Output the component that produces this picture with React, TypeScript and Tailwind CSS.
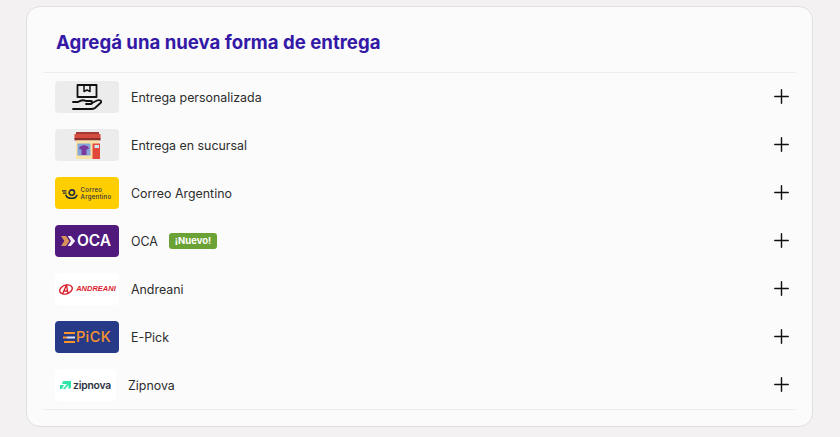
import React from 'react';
import { Plus } from 'lucide-react';

const BoxHandLogo = () => (
  <div className="w-16 h-8 rounded bg-[#ececec] flex items-center justify-center">
    <svg width="30" height="27" viewBox="0 0 30 27" fill="none" stroke="#111111" strokeWidth="1.8" strokeLinecap="round" strokeLinejoin="round">
      <path d="M5.500 13V1h19v12h-19" />
      <path d="M12 1v6.500l3-1.500 3 1.500V1" strokeWidth="1.500" />
      <path d="M1 18h5c3-2 6-2 8-1h5c1.500 0 1.500 3 0 3h-5" />
      <path d="M18 20l7-3.500c3-1 5 .5 4 2l-6 5.500c-1 .8-2 1-4 1H1" />
    </svg>
  </div>
);

const StoreLogo = () => (
  <div className="w-16 h-8 rounded bg-[#ececec] flex items-center justify-center">
    <svg width="27" height="27" viewBox="0 0 27 27">
      <rect x="2" y="0" width="23" height="2" fill="#a33a35" />
      <rect x="0.500" y="2" width="26" height="5" fill="#d44b40" />
      <rect x="0.500" y="6" width="26" height="2.500" fill="#8f2f2c" />
      <rect x="2" y="8.500" width="23" height="18.500" fill="#f8e2a6" />
      <rect x="3.500" y="11.500" width="13" height="12" fill="#86a5d8" />
      <path d="M6 14.500l4-1.500 4 1.500 1 2.500-2.500 .5V23h-5v-5.500L5 17z" fill="#7b3a9c" />
      <rect x="18.500" y="11.500" width="7.500" height="15.500" fill="#e2493b" />
      <rect x="20.500" y="13" width="4.500" height="3" fill="#cfe4f5" />
    </svg>
  </div>
);

const CorreoLogo = () => (
  <div className="w-16 h-8 rounded bg-[#ffce00] flex items-center justify-center gap-[2px] pr-[1px]">
    <svg width="17" height="11" viewBox="0 0 19 12" fill="none" stroke="#1f2a44">
      <circle cx="11" cy="5" r="3" strokeWidth="1.800" />
      <path d="M4 7.500c1 3 4 4 7 4s5-1 6-4" strokeWidth="1.800" />
      <path d="M0 3h5M1 5.500h4" strokeWidth="1.400" />
    </svg>
    <div className="flex flex-col text-[6px] leading-[7px] font-medium text-[#1f2a44] tracking-[0.3px]">
      <span>Correo</span>
      <span>Argentino</span>
    </div>
  </div>
);

const OcaLogo = () => (
  <div className="w-16 h-8 rounded bg-[#4f1a7c] flex items-center justify-center gap-[1px] pr-[2px]">
    <svg width="15" height="10" viewBox="0 0 18 12">
      <path d="M0 0h6l4 6-4 6H0l4-6z" fill="#d9935a" />
      <path d="M8 0h4l5 6-5 6H8l4-6z" fill="#f5ecf5" />
    </svg>
    <span className="text-[15.500px] leading-none font-semibold text-white">OCA</span>
  </div>
);

const AndreaniLogo = () => (
  <div className="w-16 h-8 rounded bg-white flex items-center justify-center gap-[2px]">
    <svg width="16" height="11" viewBox="0 0 15 11" fill="none" stroke="#d8232f" strokeWidth="1.400">
      <ellipse cx="7.500" cy="5.500" rx="6.500" ry="4.300" transform="rotate(-20 7.500 5.500)" />
      <path d="M4 10l4-9 1.500 9M5.500 7h4" />
    </svg>
    <span className="text-[7.500px] leading-none font-black italic text-[#d8232f] font-['Liberation_Sans',sans-serif]">ANDREANI</span>
  </div>
);

const EpickLogo = () => (
  <div className="w-16 h-8 rounded bg-[#263a88] flex items-center justify-center">
    <svg width="12" height="11" viewBox="0 0 12 11" className="mr-[1px]">
      <rect x="1" y="0" width="11" height="2" fill="#f9942b" />
      <rect x="0" y="4.500" width="4" height="2" fill="#f9942b" />
      <rect x="4" y="4.500" width="8" height="2" fill="#dfe5f5" />
      <rect x="1" y="9" width="11" height="2" fill="#f9942b" />
    </svg>
    <span className="text-[14.500px] leading-none font-medium text-[#f9942b] tracking-[0.4px]">PiCK</span>
  </div>
);

const ZipnovaLogo = () => (
  <div className="w-[61px] h-8 rounded bg-white flex items-center justify-center gap-[2px]">
    <svg width="11" height="8" viewBox="0 0 11 8" fill="#2ee6a8">
      <path d="M0 4h4L2 8H0zM3 0h8v7L8.500 8V4L5 8H3l4-5H2z" />
    </svg>
    <span className="text-[10.300px] leading-none font-semibold text-[#2b3040] tracking-[-0.2px]">zipnova</span>
  </div>
);

const rows = [
  { name: 'Entrega personalizada', logo: <BoxHandLogo /> },
  { name: 'Entrega en sucursal', logo: <StoreLogo /> },
  { name: 'Correo Argentino', logo: <CorreoLogo /> },
  { name: 'OCA', logo: <OcaLogo />, isNew: true },
  { name: 'Andreani', logo: <AndreaniLogo /> },
  { name: 'E-Pick', logo: <EpickLogo /> },
  { name: 'Zipnova', logo: <ZipnovaLogo /> },
];

export default function App() {
  return (
    <div className="h-[437px] bg-[#f3f1f2] pt-[6px] pl-[26px] pr-[27px] overflow-hidden font-['Inter',sans-serif]">
      <div className="h-[421px] bg-[#fbfbfb] border border-[#e0e0e0] rounded-[14px] px-4">
        <h2 className="h-[65px] pl-[13px] pt-[23px] text-[18.600px] leading-6 font-bold text-[#3418a6]">
          Agregá una nueva forma de entrega
        </h2>
        <ul className="border-y border-[#ededed]">
          {rows.map((row) => (
            <li key={row.name} className="h-12 pl-3 pr-[3px] flex items-center">
              {row.logo}
              <span className="ml-3 pt-[2px] text-[12.400px] text-[#2c2c2c]">{row.name}</span>
              {row.isNew && (
                <span className="ml-[11px] h-4 px-[6px] rounded-[3px] bg-[#6aa235] text-white text-[9.500px] leading-4 font-bold">¡Nuevo!</span>
              )}
              <Plus className="ml-auto mb-[2px] text-[#111111]" size={23} strokeWidth={1.5} />
            </li>
          ))}
        </ul>
      </div>
    </div>
  );
}
